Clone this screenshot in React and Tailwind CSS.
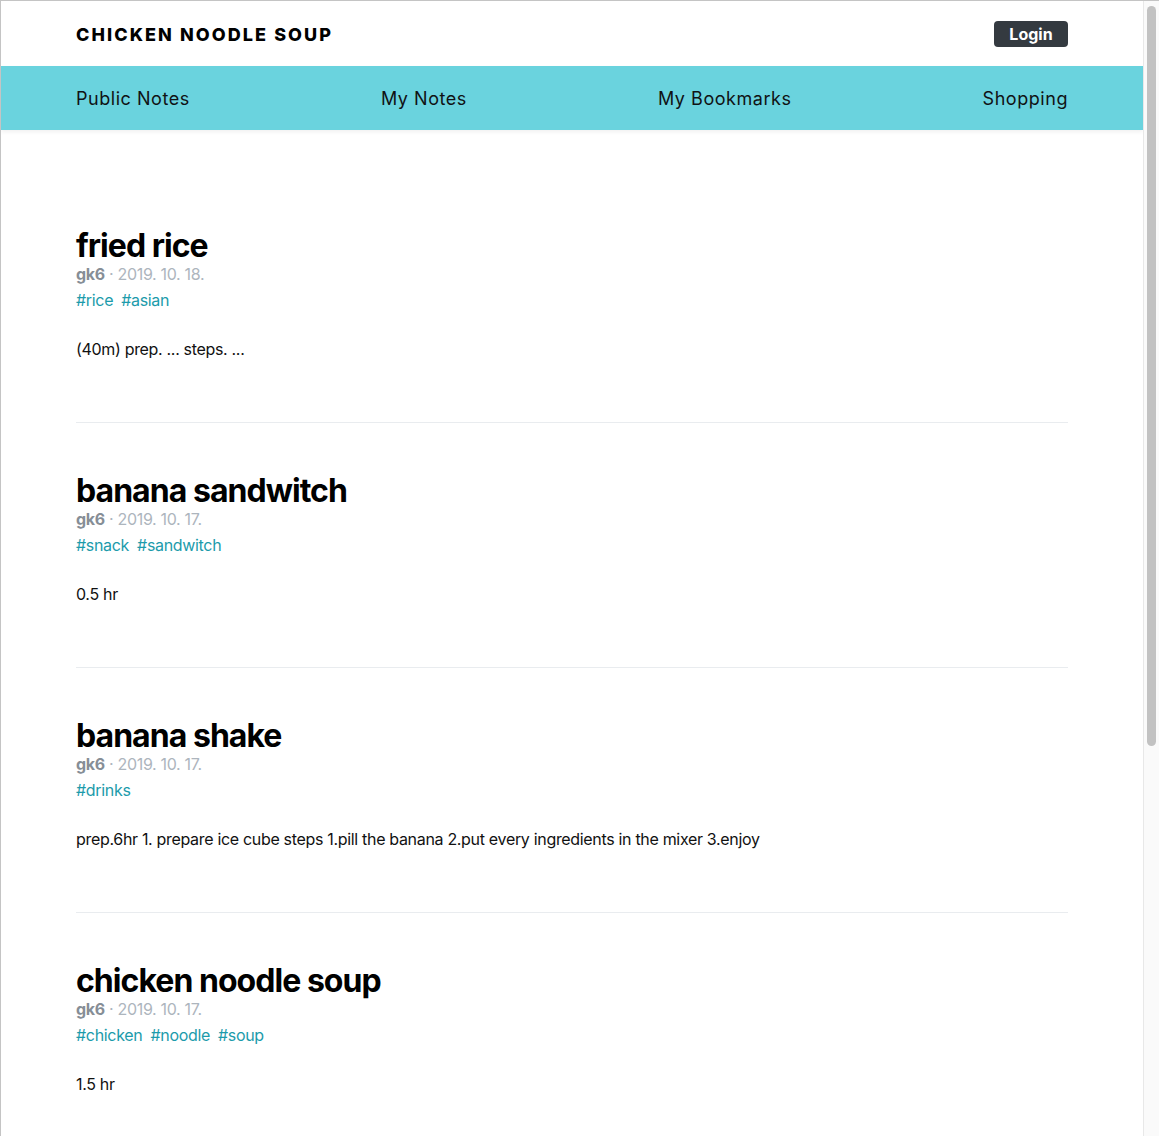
import React from 'react';

const posts = [
    { title: 'fried rice', author: 'gk6', date: '2019. 10. 18.', tags: ['rice', 'asian'], body: '(40m) prep. ... steps. ...' },
    { title: 'banana sandwitch', author: 'gk6', date: '2019. 10. 17.', tags: ['snack', 'sandwitch'], body: '0.5 hr' },
    { title: 'banana shake', author: 'gk6', date: '2019. 10. 17.', tags: ['drinks'], body: 'prep.6hr 1. prepare ice cube steps 1.pill the banana 2.put every ingredients in the mixer 3.enjoy' },
    { title: 'chicken noodle soup', author: 'gk6', date: '2019. 10. 17.', tags: ['chicken', 'noodle', 'soup'], body: '1.5 hr' },
];

const navItems = ['Public Notes', 'My Notes', 'My Bookmarks', 'Shopping'];

export default function App() {
    return (
        <div className="h-[1136px] w-full overflow-hidden flex bg-white border-t border-l border-[#c4c4c4] text-[#212529] font-['Inter','Liberation_Sans',sans-serif]">
            <div className="flex-1 flex flex-col min-w-0">
                {/* Header */}
                <header className="h-[65px] shrink-0">
                    <div className="w-[992px] mx-auto h-full flex items-center justify-between">
                        <h1 className="pt-0.5 text-[18px] font-extrabold tracking-[0.115em] text-black">CHICKEN NOODLE SOUP</h1>
                        <button className="h-[26px] w-[74px] rounded bg-[#343a40] text-white text-[16px] font-bold leading-none">Login</button>
                    </div>
                </header>

                {/* Nav */}
                <nav className="h-[64px] shrink-0 bg-[#6ad3de] shadow-[0_2px_4px_rgba(0,0,0,0.06)]">
                    <div className="w-[992px] mx-auto h-full flex items-center justify-between">
                        {navItems.map((item) => (
                            <a key={item} className="text-[18px] tracking-[0.03em] text-[#101214]">{item}</a>
                        ))}
                    </div>
                </nav>

                {/* Posts */}
                <main className="w-[992px] mx-auto pt-12 tracking-[-0.02em]">
                    {posts.map((post, i) => (
                        <article key={post.title} className={`pt-[52px] pb-[61px] ${i < posts.length - 1 ? 'border-b border-[#e9ecef]' : ''}`}>
                            <h2 className="text-[32px] leading-[32px] font-bold tracking-[-0.03em] text-black">{post.title}</h2>
                            <div className="h-6 leading-6 text-[16px] text-[#adb5bd]">
                                <span className="font-bold text-[#868e96]">{post.author}</span>
                                <span> · {post.date}</span>
                            </div>
                            <div className="mt-0.5 h-6 leading-6 text-[16px] text-[#1c9bab] flex gap-2">
                                {post.tags.map((t) => (
                                    <span key={t}>#{t}</span>
                                ))}
                            </div>
                            <p className="mt-[25px] h-6 leading-6 text-[16px] text-[#111]">{post.body}</p>
                        </article>
                    ))}
                </main>
            </div>

            {/* Scrollbar */}
            <div className="w-[16px] shrink-0 bg-[#fafafa] border-l border-[#e8e8e8] pt-[5px] flex justify-center">
                <div className="w-[9px] h-[740px] rounded-full bg-[#c2c2c2]" />
            </div>
        </div>
    );
}
